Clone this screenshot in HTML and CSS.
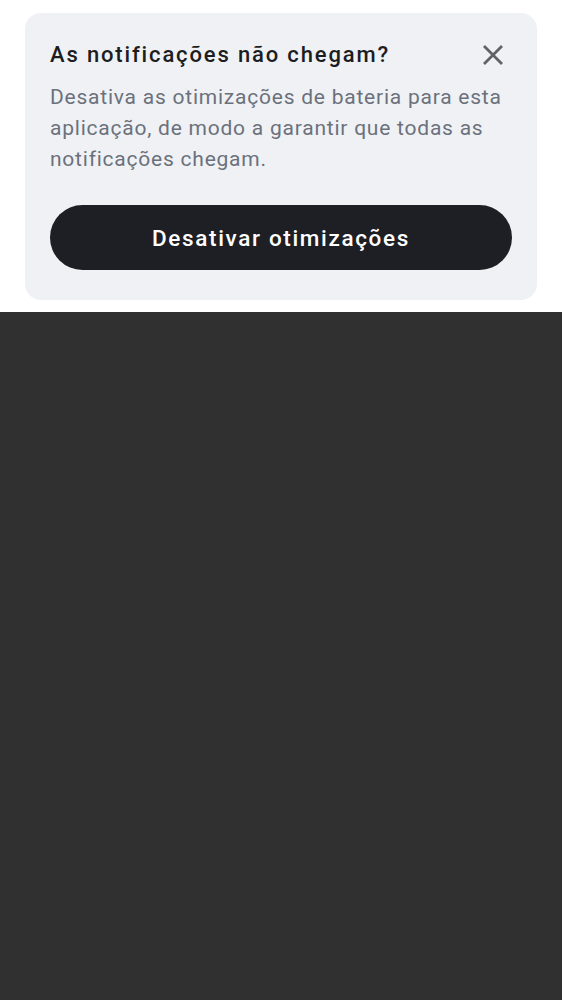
FILE: index.html
```html
<!DOCTYPE html>
<html lang="pt">
<head>
<meta charset="utf-8">
<link rel="stylesheet" href="styles.css">
</head>
<body>
<div class="top">
  <div class="card">
    <div class="head">
      <h1 class="title">As notificações não chegam?</h1>
      <button class="close" aria-label="Fechar">
        <svg width="24" height="24" viewBox="0 0 24 24"><path d="M3 3 L21 21 M21 3 L3 21" stroke="#5f6368" stroke-width="2.8" stroke-linecap="butt" fill="none"/></svg>
      </button>
    </div>
    <p class="desc">Desativa as otimizações de bateria para esta aplicação, de modo a garantir que todas as notificações chegam.</p>
    <button class="action">Desativar otimizações</button>
  </div>
</div>
<div class="rest"></div>
</body>
</html>
```
FILE: styles.css
```css
html, body { margin: 0; padding: 0; }
body { background: #303030; font-family: Roboto, "Noto Sans", sans-serif; }
.top { background: #ffffff; height: 312px; padding: 13px 25px 0; box-sizing: border-box; }
.card { background: #f0f1f5; border-radius: 16px; padding: 27px 25px 30px; height: 287px; box-sizing: border-box; }
.head { display: flex; justify-content: space-between; align-items: center; height: 30px; }
.title { margin: 0; font-size: 22px; font-weight: 500; color: #1c1d21; line-height: 30px; letter-spacing: 1.85px; }
.close { background: none; border: 0; padding: 0; margin-right: 7px; width: 24px; height: 24px; display: flex; }
.desc { margin: 12px 0 0; font-size: 21px; line-height: 31px; color: #6b717c; letter-spacing: 0.77px; }
.action { margin-top: 30px; width: 100%; height: 65px; border: 0; border-radius: 33px; background: #1e1f24; color: #fff; font-family: Roboto, sans-serif; font-size: 22.5px; font-weight: 500; letter-spacing: 1.65px; display: block; }
.rest { height: 688px; }
```
